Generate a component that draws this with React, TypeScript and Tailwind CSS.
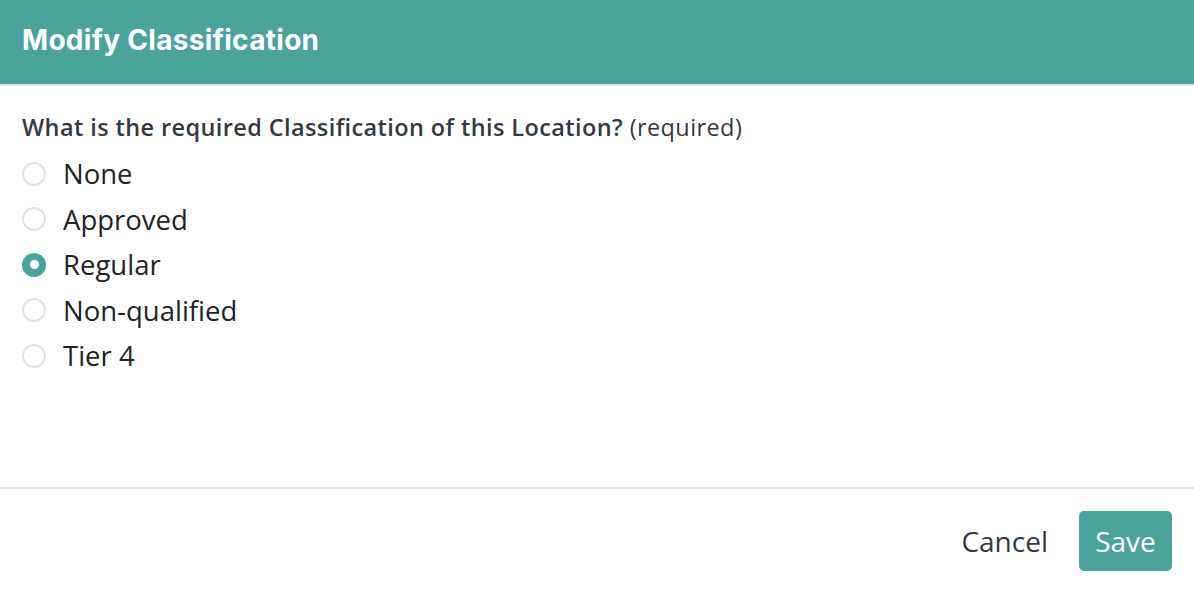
import React from "react";

const options = ["None", "Approved", "Regular", "Non-qualified", "Tier 4"];

export default function App() {
  const selected = "Regular";
  return (
    <div className="w-[1194px] h-[592px] bg-white flex flex-col" style={{ fontFamily: '"Open Sans", sans-serif' }}>
      <div className="h-[84px] bg-[#4ba49c] flex items-center px-[22px] border-b-2 border-[#e0e3e6] box-content">
        <h1 className="text-white text-[28px] font-bold tracking-[0.3px] -mt-[4px]" style={{ fontFamily: 'Inter, sans-serif' }}>
          Modify Classification
        </h1>
      </div>
      <div className="flex-1 px-[22px] pt-[28px]">
        <p className="text-[23.5px] text-[#343a40] leading-[26px] tracking-[0.4px] whitespace-nowrap">
          <span className="font-semibold">What is the required Classification of this Location?</span>{" "}
          <span>(required)</span>
        </p>
        <div className="mt-[11px] flex flex-col">
          {options.map((o) => (
            <label key={o} className="flex items-center h-[45.5px] gap-[17px]">
              {o === selected ? (
                <span className="w-[24px] h-[24px] rounded-full bg-[#4ba49c] flex items-center justify-center">
                  <span className="w-[9px] h-[9px] rounded-full bg-white" />
                </span>
              ) : (
                <span className="w-[24px] h-[24px] rounded-full border-2 border-[#dfe2e6] bg-white" />
              )}
              <span className="text-[27.5px] text-[#212529]">{o}</span>
            </label>
          ))}
        </div>
      </div>
      <div className="h-[105px] border-t-2 border-[#e0e3e6] flex items-center justify-end pr-[22px] gap-[31px]">
        <button className="text-[28px] text-[#343a40]">Cancel</button>
        <button className="h-[60px] w-[93px] rounded-[5px] bg-[#4ba49c] text-white text-[28px]">Save</button>
      </div>
    </div>
  );
}
